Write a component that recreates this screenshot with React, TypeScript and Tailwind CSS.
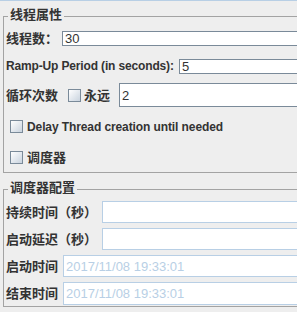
import React from "react";

function Field({ value, className = "", tone = "dark", placeholder = false }: { value?: string; className?: string; tone?: "dark" | "light"; placeholder?: boolean }) {
  const border = tone === "dark" ? "border-[#7a8a99]" : "border-[#b8cfe5]";
  return (
    <div className={`flex-1 bg-white border ${border} flex items-center pl-[2px] ${className}`}>
      <span className={`text-[13px] leading-none font-['Liberation_Sans',sans-serif] ${placeholder ? "text-[#b8cfe5] text-[12px]" : "text-[#333333]"}`}>{value}</span>
    </div>
  );
}

function Check() {
  return <div className="w-[13px] h-[13px] border border-[#7a8a99] bg-gradient-to-br from-[#ffffff] to-[#c9d3de] shrink-0" />;
}

export default function App() {
  const label = "font-bold text-[13px] leading-none text-[#333333] whitespace-nowrap";
  return (
    <div className="w-[297px] h-[312px] bg-[#eeeeee] border-t border-[#b8cfe5] overflow-hidden font-['Liberation_Sans','Noto_Sans_CJK_SC',sans-serif]">
      {/* 线程属性 */}
      <div className="relative ml-[3px] mt-[15px] w-[420px] h-[157px] border border-[#a3a3a3] pl-[2px]">
        <div className={`absolute -top-[9px] left-[4px] px-[2px] bg-[#eeeeee] ${label} leading-[16px]`}>线程属性</div>
        <div className="flex items-center mt-[11px] h-[21px]">
          <div className={`w-[56px] ${label}`}>线程数：</div>
          <Field value="30" />
        </div>
        <div className="flex items-center mt-[6px] h-[22px]">
          <div className="w-[173px] font-bold text-[12px] tracking-[-0.15px] leading-none text-[#333333] whitespace-nowrap">Ramp-Up Period (in seconds):</div>
          <Field value="5" />
        </div>
        <div className="flex items-center mt-[6px] h-[24px]">
          <div className={`w-[62px] ${label}`}>循环次数</div>
          <Check />
          <div className={`ml-[3px] w-[35px] ${label}`}>永远</div>
          <Field value="2" className="h-[24px]" />
        </div>
        <div className="flex items-center mt-[13px] h-[13px] ml-[4px]">
          <Check />
          <div className="ml-[4px] font-bold text-[12px] tracking-[-0.1px] leading-none text-[#333333] whitespace-nowrap">Delay Thread creation until needed</div>
        </div>
        <div className="flex items-center mt-[18px] h-[13px] ml-[4px]">
          <Check />
          <div className={`ml-[4px] ${label}`}>调度器</div>
        </div>
      </div>

      {/* 调度器配置 */}
      <div className="relative ml-[3px] mt-[16px] w-[420px] h-[118px] border border-[#a3a3a3] pl-[2px]">
        <div className={`absolute -top-[9px] left-[4px] px-[2px] bg-[#eeeeee] ${label} leading-[16px]`}>调度器配置</div>
        <div className="flex items-center mt-[11px] h-[22px]">
          <div className={`w-[96px] ${label}`}>持续时间（秒）</div>
          <Field tone="light" className="h-[22px]" />
        </div>
        <div className="flex items-center mt-[5px] h-[22px]">
          <div className={`w-[96px] ${label}`}>启动延迟（秒）</div>
          <Field tone="light" className="h-[22px]" />
        </div>
        <div className="flex items-center mt-[5px] h-[22px]">
          <div className={`w-[57px] ${label}`}>启动时间</div>
          <Field tone="light" placeholder value="2017/11/08 19:33:01" className="h-[22px]" />
        </div>
        <div className="flex items-center mt-[5px] h-[23px]">
          <div className={`w-[57px] ${label}`}>结束时间</div>
          <Field tone="light" placeholder value="2017/11/08 19:33:01" className="h-[23px]" />
        </div>
      </div>
    </div>
  );
}
